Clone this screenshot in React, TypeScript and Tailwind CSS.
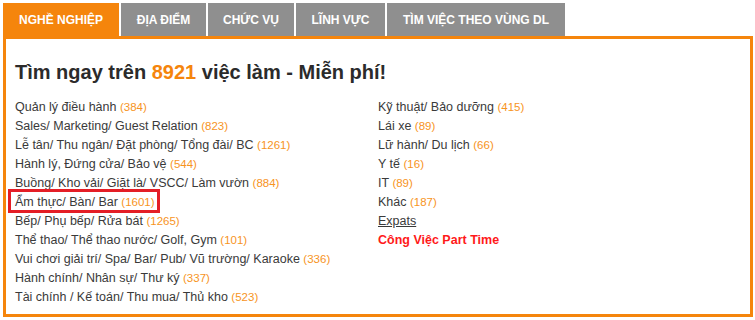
import React from 'react'

const TABS = [
  { label: 'NGHỀ NGHIỆP', w: 'w-[116px]', active: true },
  { label: 'ĐỊA ĐIỂM', w: 'w-[85px]' },
  { label: 'CHỨC VỤ', w: 'w-[86px]' },
  { label: 'LĨNH VỰC', w: 'w-[89px]' },
  { label: 'TÌM VIỆC THEO VÙNG DL', w: 'w-[178px]' },
]

const LEFT: [string, number][] = [
  ['Quản lý điều hành', 384],
  ['Sales/ Marketing/ Guest Relation', 823],
  ['Lễ tân/ Thu ngân/ Đặt phòng/ Tổng đài/ BC', 1261],
  ['Hành lý, Đứng cửa/ Bảo vệ', 544],
  ['Buồng/ Kho vải/ Giặt là/ VSCC/ Làm vườn', 884],
  ['Ẩm thực/ Bàn/ Bar', 1601],
  ['Bếp/ Phụ bếp/ Rửa bát', 1265],
  ['Thể thao/ Thể thao nước/ Golf, Gym', 101],
  ['Vui chơi giải trí/ Spa/ Bar/ Pub/ Vũ trường/ Karaoke', 336],
  ['Hành chính/ Nhân sự/ Thư ký', 337],
  ['Tài chính / Kế toán/ Thu mua/ Thủ kho', 523],
]

const RIGHT: [string, number][] = [
  ['Kỹ thuật/ Bảo dưỡng', 415],
  ['Lái xe', 89],
  ['Lữ hành/ Du lịch', 66],
  ['Y tế', 16],
  ['IT', 89],
  ['Khác', 187],
]

function Item({ name, count }: { name: string; count: number }) {
  return (
    <>
      {name} <span className="text-[11.5px] leading-none text-[#f7941d]">({count})</span>
    </>
  )
}

export default function App() {
  return (
    <div className="w-[755px] h-[320px] bg-white pl-[3px] pt-[3px] font-['Liberation_Sans',Arial,sans-serif]">
      {/* tabs */}
      <div className="flex gap-[2px]">
        {TABS.map(t => (
          <div
            key={t.label}
            className={`${t.w} h-[33px] flex items-center justify-center text-[12px] font-bold text-white ${t.active ? 'bg-[#f5850c]' : 'bg-[#8f8f8f]'}`}
          >
            {t.label}
          </div>
        ))}
      </div>

      {/* box */}
      <div className="w-[750px] h-[281px] border-[3px] border-[#f5850c] pt-[22px] pl-[9px]">
        <h1 className="text-[20px] leading-[23px] font-bold text-[#2b2b2b]">
          Tìm ngay trên <span className="text-[#f5850c]">8921</span> việc làm - Miễn phí!
        </h1>

        <div className="flex mt-[14px] text-[12.5px] leading-[19px] text-[#3a3a3a]">
          <div className="w-[363px]">
            {LEFT.map(([n, c]) => (
              <div key={n} className="h-[19px]">
                {n === 'Ẩm thực/ Bàn/ Bar' ? (
                  <span className="inline-block h-[24px] border-[3px] border-[#e41e26] -ml-[7px] pl-[4px] pr-[2px] -mt-[4px] -mb-[1px] leading-[21px]">
                    <Item name={n} count={c} />
                  </span>
                ) : (
                  <Item name={n} count={c} />
                )}
              </div>
            ))}
          </div>
          <div>
            {RIGHT.map(([n, c]) => (
              <div key={n} className="h-[19px]">
                <Item name={n} count={c} />
              </div>
            ))}
            <div className="h-[19px] underline">Expats</div>
            <div className="h-[19px] font-bold text-[#ff1a1a]">Công Việc Part Time</div>
          </div>
        </div>
      </div>
    </div>
  )
}
